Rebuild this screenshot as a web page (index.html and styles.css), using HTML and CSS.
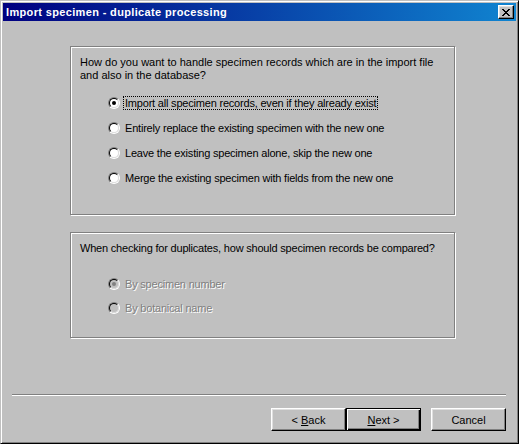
FILE: index.html
```html
<!DOCTYPE html>
<html lang="en">

<head>
    <meta charset="UTF-8">
    <title>Import specimen - duplicate processing</title>
    <link rel="stylesheet" href="styles.css">
</head>

<body>

    <div class="window">
        <div class="titlebar">
            <span class="title">Import specimen - duplicate processing</span>
            <button class="close-btn" aria-label="Close">
                <svg width="8" height="7" viewBox="0 0 8 7" shape-rendering="crispEdges">
                    <path fill="#000" d="M0 0h2v1h-2z M6 0h2v1h-2z M1 1h2v1h-2z M5 1h2v1h-2z M2 2h4v1h-4z M3 3h2v1h-2z M2 4h4v1h-4z M1 5h2v1h-2z M5 5h2v1h-2z M0 6h2v1h-2z M6 6h2v1h-2z" />
                </svg>
            </button>
        </div>

        <div class="content">
            <div class="group group-mode">
                <p class="question">How do you want to handle specimen records which are in the import file<br>and also in the database?</p>
                <div class="options">
                    <div class="option">
                        <span class="radio checked"></span>
                        <span class="label focused">Import all specimen records, even if they already exist</span>
                    </div>
                    <div class="option">
                        <span class="radio"></span>
                        <span class="label">Entirely replace the existing specimen with the new one</span>
                    </div>
                    <div class="option">
                        <span class="radio"></span>
                        <span class="label">Leave the existing specimen alone, skip the new one</span>
                    </div>
                    <div class="option">
                        <span class="radio"></span>
                        <span class="label">Merge the existing specimen with fields from the new one</span>
                    </div>
                </div>
            </div>

            <div class="group group-compare">
                <p class="question">When checking for duplicates, how should specimen records be compared?</p>
                <div class="options compact">
                    <div class="option disabled">
                        <span class="radio checked"></span>
                        <span class="label">By specimen number</span>
                    </div>
                    <div class="option disabled">
                        <span class="radio"></span>
                        <span class="label">By botanical name</span>
                    </div>
                </div>
            </div>

            <div class="separator"></div>

            <div class="buttons">
                <button class="btn">&lt; <u>B</u>ack</button>
                <button class="btn default"><u>N</u>ext &gt;</button>
                <button class="btn cancel">Cancel</button>
            </div>
        </div>
    </div>

</body>

</html>
```

FILE: styles.css
```css
body {
    margin: 0;
    background: #c0c0c0;
    font-family: "Liberation Sans", Arial, sans-serif;
    font-size: 11px;
    color: #000;
}

.window {
    width: 519px;
    height: 444px;
    box-sizing: border-box;
    background: #c0c0c0;
    border: 1px solid;
    border-color: #c0c0c0 #000 #000 #c0c0c0;
    box-shadow: inset 1px 1px 0 #fff, inset -1px -1px 0 #808080;
    padding: 2px;
    display: flex;
    flex-direction: column;
}

/* title bar */
.titlebar {
    height: 18px;
    background: linear-gradient(to right, #000080, #1084d0);
    display: flex;
    align-items: center;
    justify-content: space-between;
    padding-left: 3px;
}

.title {
    color: #fff;
    font-weight: bold;
    font-size: 11px;
    letter-spacing: 0.35px;
}

.close-btn {
    width: 16px;
    height: 14px;
    margin-right: 2px;
    padding: 0;
    box-sizing: border-box;
    background: #c0c0c0;
    border: 1px solid;
    border-color: #fff #000 #000 #fff;
    box-shadow: inset -1px -1px 0 #808080, inset 1px 1px 0 #dfdfdf;
    display: flex;
    align-items: center;
    justify-content: center;
}

.close-btn svg {
    display: block;
    margin-left: -1px;
}

/* body */
.content {
    flex: 1;
    display: flex;
    flex-direction: column;
}

.group {
    margin-left: 67px;
    width: 385px;
    box-sizing: border-box;
    border: 1px solid #808080;
    box-shadow: inset 1px 1px 0 #fff, 1px 1px 0 #fff;
    padding: 9px 9px 0 9px;
}

.group-mode {
    margin-top: 25px;
    height: 169px;
}

.group-compare {
    margin-top: 17px;
    height: 106px;
}

.question {
    margin: 0;
    line-height: 13px;
    white-space: nowrap;
}

.group-compare .question {
    letter-spacing: -0.2px;
}

.options {
    margin-top: 8px;
    padding-left: 28px;
}

.options.compact {
    margin-top: 17px;
}

.option {
    height: 25px;
    display: flex;
    align-items: center;
}

.options.compact .option {
    height: 24px;
}

.radio {
    width: 12px;
    height: 12px;
    box-sizing: border-box;
    border-radius: 50%;
    border: 1px solid;
    border-color: #808080 #fff #fff #808080;
    position: relative;
    flex-shrink: 0;
}

.radio::before {
    content: "";
    position: absolute;
    inset: 0;
    border-radius: 50%;
    border: 1px solid;
    border-color: #000 #dfdfdf #dfdfdf #000;
    background: #fff;
}

.radio.checked::after {
    content: "";
    position: absolute;
    left: 3px;
    top: 3px;
    width: 4px;
    height: 4px;
    border-radius: 50%;
    background: #000;
}

.label {
    margin-left: 3px;
    padding: 0 1px;
    line-height: 12px;
    letter-spacing: -0.2px;
    white-space: nowrap;
    border: 1px dotted transparent;
}

.label.focused {
    border-color: #000;
}

.option.disabled .radio::before {
    background: #c0c0c0;
}

.option.disabled .radio.checked::after {
    background: #808080;
}

.option.disabled .label {
    color: #808080;
    text-shadow: 1px 1px 0 #fff;
}

.separator {
    margin-top: 56px;
    margin-left: 9px;
    width: 494px;
    border-top: 1px solid #808080;
    border-bottom: 1px solid #fff;
}

/* buttons */
.buttons {
    margin-top: 12px;
    padding-left: 268px;
    display: flex;
}

.btn {
    width: 75px;
    height: 23px;
    box-sizing: border-box;
    padding: 0;
    background: #c0c0c0;
    font-family: "Liberation Sans", Arial, sans-serif;
    font-size: 11px;
    color: #000;
    border: 1px solid;
    border-color: #fff #000 #000 #fff;
    box-shadow: inset -1px -1px 0 #808080, inset 1px 1px 0 #dfdfdf;
}

.btn.default {
    border: 1px solid #000;
    box-shadow: inset 1px 1px 0 #fff, inset -1px -1px 0 #000, inset -2px -2px 0 #808080;
}

.btn.cancel {
    margin-left: 10px;
}
```
